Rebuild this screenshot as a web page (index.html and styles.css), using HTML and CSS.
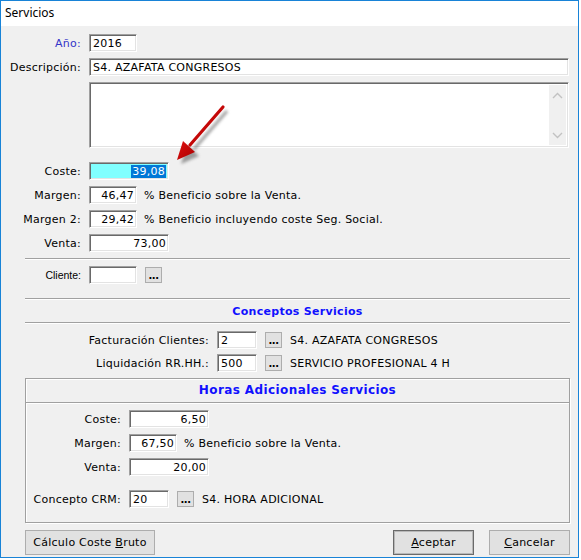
FILE: index.html
```html
<!DOCTYPE html>
<html lang="es">
<head>
    <meta charset="UTF-8">
    <title>Servicios</title>
    <link rel="stylesheet" href="styles.css">
</head>
<body>
    <div class="window">
        <div class="titlebar">Servicios</div>

        <div class="client">
            <!-- Datos del servicio -->
            <div class="row">
                <div class="lbl lbl-main blue">Año:</div>
                <div class="field w48">2016</div>
            </div>
            <div class="row mt6">
                <div class="lbl lbl-main">Descripción:</div>
                <div class="field w480">S4. AZAFATA CONGRESOS</div>
            </div>
            <div class="row mt6">
                <div class="lbl lbl-main"></div>
                <div class="field memo w480">
                    <div class="vscroll">
                        <svg width="11" height="7" viewBox="0 0 11 7"><path d="M1 6 L5.5 1.5 L10 6" fill="none" stroke="#c2c2c2" stroke-width="1.4"/></svg>
                        <svg width="11" height="7" viewBox="0 0 11 7"><path d="M1 1 L5.5 5.5 L10 1" fill="none" stroke="#c2c2c2" stroke-width="1.4"/></svg>
                    </div>
                </div>
            </div>

            <div class="row mt14">
                <div class="lbl lbl-main">Coste:</div>
                <div class="field w80 num cyan"><span class="sel">39,08</span></div>
            </div>
            <div class="row mt6">
                <div class="lbl lbl-main">Margen:</div>
                <div class="field w48 num">46,47</div>
                <div class="note">% Beneficio sobre la Venta.</div>
            </div>
            <div class="row mt6">
                <div class="lbl lbl-main">Margen 2:</div>
                <div class="field w48 num">29,42</div>
                <div class="note">% Beneficio incluyendo coste Seg. Social.</div>
            </div>
            <div class="row mt6">
                <div class="lbl lbl-main">Venta:</div>
                <div class="field w80 num">73,00</div>
            </div>

            <div class="sep mt6"></div>

            <div class="row mt6">
                <div class="lbl lbl-main sans">Cliente:</div>
                <div class="field w48"></div>
                <div class="dots">...</div>
            </div>

            <!-- Conceptos -->
            <div class="sep mt14"></div>
            <div class="heading">Conceptos Servicios</div>
            <div class="sep"></div>

            <div class="indent">
                <div class="row mt7">
                    <div class="lbl lbl-concept">Facturación Clientes:</div>
                    <div class="field w40">2</div>
                    <div class="dots">...</div>
                    <div class="desc">S4. AZAFATA CONGRESOS</div>
                </div>
                <div class="row mt5">
                    <div class="lbl lbl-concept">Liquidación RR.HH.:</div>
                    <div class="field w40">500</div>
                    <div class="dots">...</div>
                    <div class="desc">SERVICIO PROFESIONAL 4 H</div>
                </div>

                <!-- Horas adicionales -->
                <div class="group mt6">
                    <div class="group-head">Horas Adicionales Servicios</div>
                    <div class="group-body">
                        <div class="row">
                            <div class="lbl lbl-group">Coste:</div>
                            <div class="field w80 num">6,50</div>
                        </div>
                        <div class="row mt6">
                            <div class="lbl lbl-group">Margen:</div>
                            <div class="field w48 num">67,50</div>
                            <div class="note">% Beneficio sobre la Venta.</div>
                        </div>
                        <div class="row mt6">
                            <div class="lbl lbl-group">Venta:</div>
                            <div class="field w80 num">20,00</div>
                        </div>
                        <div class="row mt14">
                            <div class="lbl lbl-group">Concepto CRM:</div>
                            <div class="field w40">20</div>
                            <div class="dots">...</div>
                            <div class="desc">S4. HORA ADICIONAL</div>
                        </div>
                    </div>
                </div>

                <div class="buttons">
                    <button class="btn btn-wide">Cálculo Coste <u>B</u>ruto</button>
                    <span class="spacer"></span>
                    <button class="btn default"><u>A</u>ceptar</button>
                    <button class="btn"><u>C</u>ancelar</button>
                </div>
            </div>
        </div>

        <!-- flecha roja sobre el campo Coste -->
        <svg class="arrow" width="80" height="75" viewBox="0 0 80 75">
            <defs>
                <filter id="soft" x="-20%" y="-20%" width="140%" height="140%">
                    <feGaussianBlur stdDeviation="1.6"/>
                </filter>
                <linearGradient id="red" x1="0" y1="0" x2="1" y2="1">
                    <stop offset="0" stop-color="#e01010"/>
                    <stop offset="1" stop-color="#a80000"/>
                </linearGradient>
            </defs>
            <g transform="translate(4 4)" opacity="0.55" filter="url(#soft)">
                <line x1="63" y1="7" x2="30" y2="45" stroke="#555" stroke-width="3.2"/>
                <polygon points="17,60 35,52 23,41" fill="#555"/>
            </g>
            <line x1="63" y1="7" x2="30" y2="45" stroke="url(#red)" stroke-width="3.2" stroke-linecap="round"/>
            <polygon points="17,60 35,52 23,41" fill="url(#red)"/>
        </svg>
    </div>
</body>
</html>
```

FILE: styles.css
```css
* { margin: 0; padding: 0; box-sizing: border-box; }

body {
    background: #fff;
    font-family: "DejaVu Sans", Verdana, sans-serif;
    font-size: 11px;
    letter-spacing: 0.25px;
    color: #000;
}

.window {
    position: relative;
    width: 579px;
    height: 558px;
    border: 1px solid #1883d7;
    background: #fff;
}

.titlebar {
    height: 25px;
    line-height: 24px;
    padding-left: 4px;
    font-family: "Noto Sans", "Open Sans", sans-serif;
    font-size: 12px;
    letter-spacing: 0;
    background: #fff;
}

.client {
    height: 531px;
    background: #f0f0f0;
    padding-top: 8px;
}

.row {
    display: flex;
    align-items: center;
    gap: 8px;
    height: 18px;
}

.mt5 { margin-top: 5px; }
.mt6 { margin-top: 6px; }
.mt7 { margin-top: 7px; }
.mt14 { margin-top: 14px; }

.lbl {
    text-align: right;
    white-space: nowrap;
    flex-shrink: 0;
}

.lbl-main { width: 80px; }
.lbl-concept { width: 184px; }
.lbl-group { width: 95px; }

.blue { color: #3434c8; }

.sans {
    font-family: "Liberation Sans", Arial, sans-serif;
    font-size: 10.5px;
    letter-spacing: 0;
}

.field {
    height: 18px;
    border: 1px solid;
    border-color: #a0a0a0 #fff #fff #a0a0a0;
    box-shadow: inset 1px 1px #696969, inset -1px -1px #e3e3e3;
    background: #fff;
    padding: 0 3px;
    line-height: 18px;
    white-space: nowrap;
    overflow: hidden;
    flex-shrink: 0;
}

.w40 { width: 40px; }
.w48 { width: 48px; }
.w80 { width: 80px; }
.w480 { width: 480px; }

.num { text-align: right; padding-right: 2px; }

.cyan { background: #80ffff; }

.sel {
    background: #0078d7;
    color: #fff;
    padding: 0 1px;
}

.memo {
    height: 66px;
    padding: 2px 2px 2px 0;
    display: flex;
    justify-content: flex-end;
}

.row:has(.memo) { height: 66px; align-items: flex-start; }

.vscroll {
    width: 17px;
    height: 100%;
    background: #f0f0f0;
    display: flex;
    flex-direction: column;
    justify-content: space-between;
    align-items: center;
    padding: 7px 0 6px;
}

.note { margin-left: -1px; }

.desc { white-space: nowrap; }

.dots {
    width: 17px;
    height: 16px;
    border: 1px solid #adadad;
    background: #e1e1e1;
    font-weight: bold;
    font-size: 10px;
    line-height: 15px;
    text-align: center;
    letter-spacing: -0.5px;
}

.sep {
    margin-left: 24px;
    width: 545px;
    height: 2px;
    border-top: 1px solid #a0a0a0;
    border-bottom: 1px solid #fff;
}

.heading {
    height: 22px;
    line-height: 24px;
    margin-left: 24px;
    width: 545px;
    text-align: center;
    color: #1010ff;
    font-weight: bold;
    letter-spacing: 0.3px;
}

.indent { margin-left: 24px; width: 545px; }

.group {
    border: 1px solid #a0a0a0;
    box-shadow: inset 1px 1px #fff, 1px 1px #fff;
    height: 145px;
}

.group-head {
    height: 24px;
    line-height: 23px;
    text-align: center;
    color: #1010ff;
    font-weight: bold;
    font-size: 12px;
    letter-spacing: 0.4px;
    border-bottom: 1px solid #a0a0a0;
    box-shadow: 0 1px #fff;
}

.group-body { padding-top: 7px; }

.buttons {
    display: flex;
    margin-top: 7px;
    gap: 15px;
}

.spacer { flex: 1; }

.btn {
    height: 25px;
    width: 81px;
    background: #e1e1e1;
    border: 1px solid #adadad;
    font-family: "DejaVu Sans", Verdana, sans-serif;
    font-size: 11px;
    letter-spacing: 0.25px;
    color: #000;
}

.btn-wide { width: 130px; }

.btn.default {
    border-color: #6a6a6a;
    box-shadow: inset 0 0 0 1px #b8b8b8;
}

.arrow {
    position: absolute;
    left: 159px;
    top: 99px;
}
```
